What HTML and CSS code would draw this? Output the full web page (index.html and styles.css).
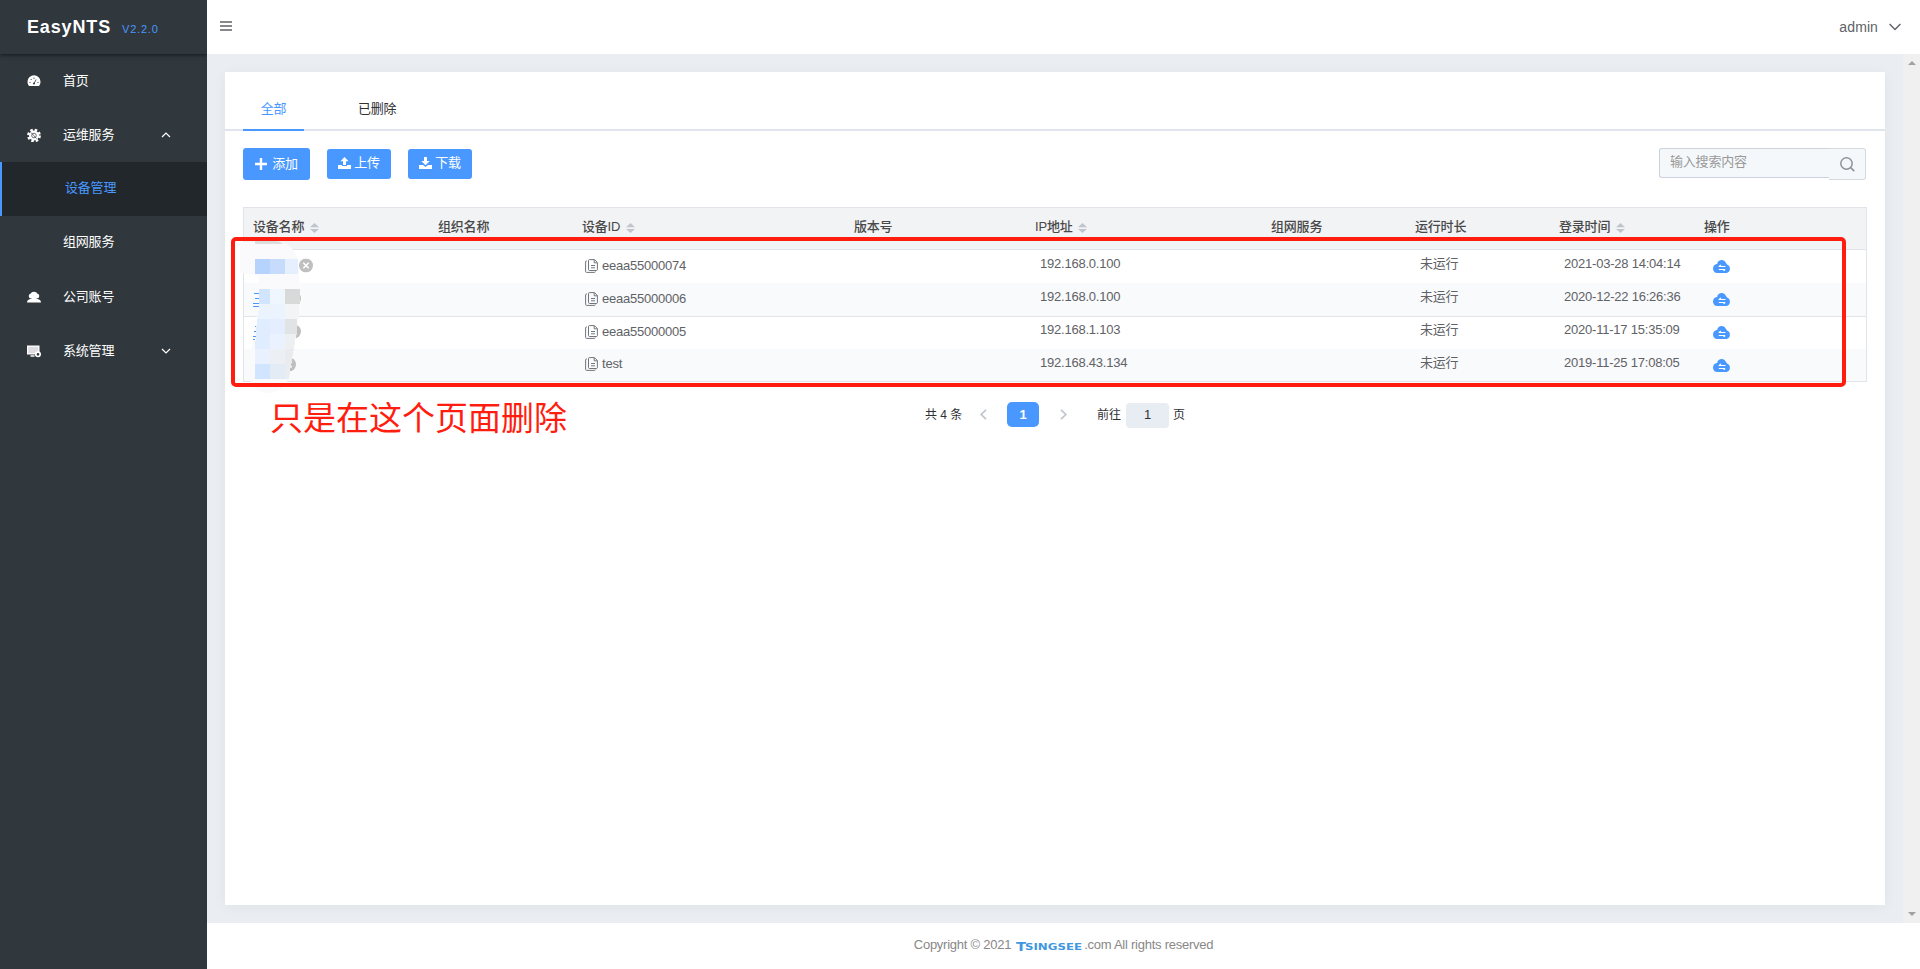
FILE: index.html
```html
<!DOCTYPE html>
<html lang="zh-CN">
<head>
<meta charset="utf-8">
<title>EasyNTS</title>
<link rel="stylesheet" href="styles.css">
</head>
<body>
<svg class="defs" width="0" height="0">
  <symbol id="copy" viewBox="0 0 13 14"><path d="M3.500 1.600a1 1 0 0 1 1-1h5L12.400 3.500v7a1 1 0 0 1-1 1h-6.900a1 1 0 0 1-1-1zM9.200.800v3h3M6 6.500h4M6 8.800h4M2 2H1.500a.900.900 0 0 0-.900.900v9.500a1 1 0 0 0 1 1h7.800a1 1 0 0 0 1-.900" fill="none" stroke="#70757d" stroke-width="1"/></symbol>
  <symbol id="cloud" viewBox="0 0 18 14"><path d="M4.200 5A4.600 4.600 0 0 1 13 3.900a3.200 3.200 0 0 1 1 1.600A4.500 4.500 0 0 1 13.800 14H4.200A4.600 4.600 0 0 1 2.800 5.200 4 4 0 0 1 4.200 5z" fill="#4898ff"/><path d="M5.600 7.500h6.900M8 6L6.200 7.500M5.800 10.500h6.400M10.600 11.800l1.600-1.300" stroke="#fff" stroke-width="1.200" fill="none"/></symbol>
  <symbol id="sort" viewBox="0 0 9 10"><path d="M0 4.200L4.500 0 9 4.200zM0 6L4.500 10 9 6z" fill="#c0c4cc"/></symbol>
  <symbol id="close" viewBox="0 0 14 14"><circle cx="7" cy="7" r="7" fill="#bfbfbf"/><path d="M4.300 4.300l5.400 5.400M9.700 4.300L4.300 9.700" stroke="#fff" stroke-width="1.600"/></symbol>
</svg>
<div class="app">
  <aside class="side">
    <div class="brand"><b>EasyNTS</b><span>V2.2.0</span></div>
    <nav>
      <a class="item"><svg class="ico" viewBox="0 0 14 14"><path d="M2 12A6.500 6.500 0 1 1 12 12z" fill="#fff"/><g fill="#30373d"><circle cx="3" cy="8.500" r=".6"/><circle cx="4.200" cy="5.500" r=".6"/><circle cx="7" cy="4.200" r=".6"/><circle cx="11" cy="8.500" r=".6"/><circle cx="7" cy="9.500" r="1"/></g><path d="M7 9.500l2.200-4" stroke="#30373d" stroke-width=".8"/></svg><span>首页</span></a>
      <a class="item"><svg class="ico" viewBox="0 0 14 14"><circle cx="7" cy="7.500" r="5" fill="#fff"/><circle cx="7" cy="7.500" r="5.700" fill="none" stroke="#fff" stroke-width="2.400" stroke-dasharray="2.500 1.980"/><circle cx="7" cy="7.500" r="2.300" fill="none" stroke="#30373d" stroke-width=".7"/><path d="M4 4.500l5.500 6" stroke="#30373d" stroke-width=".7"/></svg><span>运维服务</span><svg class="arr" viewBox="0 0 10 6"><path d="M1 5l4-4 4 4"/></svg></a>
      <a class="item active"><span>设备管理</span></a>
      <a class="item sub"><span>组网服务</span></a>
      <a class="item"><svg class="ico" viewBox="0 0 14 14"><g fill="#fff"><circle cx="4.300" cy="6" r="2.500"/><circle cx="9.700" cy="6" r="2.500"/><circle cx="7" cy="5" r="3.300"/><path d="M0 12.500q0-2.700 3.500-3.500h7q3.500.800 3.500 3.500zM4.500 7h5v3h-5z"/></g></svg><span>公司账号</span></a>
      <a class="item"><svg class="ico" viewBox="0 0 14 14"><path d="M0 1.500h12.500v9H0z" fill="#fff"/><path d="M1.200 2.800h10v6.500h-10z" fill="#dcdce2"/><path d="M3.500 12h4" stroke="#fff" stroke-width="1.500"/><circle cx="11" cy="10.300" r="2.200" fill="#30373d" stroke="#fff" stroke-width="1.700"/></svg><span>系统管理</span><svg class="arr" viewBox="0 0 10 6"><path d="M1 1l4 4 4-4"/></svg></a>
    </nav>
  </aside>
  <div class="main">
    <header class="top">
      <svg width="12" height="10" viewBox="0 0 12 10"><path d="M0 1h12M0 5h12M0 9h12" stroke="#606266" stroke-width="1.600"/></svg>
      <div class="user">admin<svg width="12" height="8" viewBox="0 0 12 8"><path d="M.6 1L6 6.500 11.400 1" fill="none" stroke="#606266" stroke-width="1.400"/></svg></div>
    </header>
    <div class="scroll">
      <div class="content">
        <section class="card">
          <div class="tabs"><span class="tab on">全部</span><span class="tab two">已删除</span></div>
          <div class="tools">
            <button class="btn add"><svg width="12" height="12" viewBox="0 0 12 12"><path d="M6 0v12M0 6h12" stroke="#fff" stroke-width="2.400"/></svg>添加</button>
            <button class="btn"><svg width="13" height="12" viewBox="0 0 13 12"><path d="M6.500 0L10.500 4.300H8V8H5V4.300H2.500zM0 8h4v1h5V8h4v4H0z" fill="#fff"/></svg>上传</button>
            <button class="btn"><svg width="13" height="12" viewBox="0 0 13 12"><path d="M6.500 8.200L2.300 4H5V0h3v4h2.700zM0 8h4l2.500 2L9 8h4v4H0z" fill="#fff"/></svg>下载</button>
            <div class="search"><div class="inp">输入搜索内容</div><div class="go"><svg width="15" height="15" viewBox="0 0 15 15"><circle cx="6.500" cy="6.500" r="5.700" fill="none" stroke="#909399" stroke-width="1.500"/><path d="M10.700 10.700l3.600 3.400" stroke="#909399" stroke-width="1.600"/></svg></div></div>
          </div>
          <div class="table">
            <div class="row head"><div class="first">设备名称<svg class="sort"><use href="#sort"/></svg></div><div>组织名称</div><div>设备ID<svg class="sort"><use href="#sort"/></svg></div><div>版本号</div><div>IP地址<svg class="sort"><use href="#sort"/></svg></div><div>组网服务</div><div>运行时长</div><div>登录时间<svg class="sort"><use href="#sort"/></svg></div><div class="ops">操作</div></div>
            <div class="row"><div></div><div></div><div class="id"><svg><use href="#copy"/></svg>eeaa55000074</div><div></div><div class="v">192.168.0.100</div><div></div><div class="v">未运行</div><div class="v">2021-03-28 14:04:14</div><div class="op"><svg><use href="#cloud"/></svg></div></div>
            <div class="row alt"><div></div><div></div><div class="id"><svg><use href="#copy"/></svg>eeaa55000006</div><div></div><div class="v">192.168.0.100</div><div></div><div class="v">未运行</div><div class="v">2020-12-22 16:26:36</div><div class="op"><svg><use href="#cloud"/></svg></div></div>
            <div class="row"><div></div><div></div><div class="id"><svg><use href="#copy"/></svg>eeaa55000005</div><div></div><div class="v">192.168.1.103</div><div></div><div class="v">未运行</div><div class="v">2020-11-17 15:35:09</div><div class="op"><svg><use href="#cloud"/></svg></div></div>
            <div class="row alt last"><div></div><div></div><div class="id"><svg><use href="#copy"/></svg>test</div><div></div><div class="v">192.168.43.134</div><div></div><div class="v">未运行</div><div class="v">2019-11-25 17:08:05</div><div class="op"><svg><use href="#cloud"/></svg></div></div>
            <svg class="mosaic" width="120" height="165" viewBox="225 235 120 165">
              <use href="#close" x="299" y="258.500" width="14" height="14"/>
              <use href="#close" x="287" y="291.500" width="14" height="14"/>
              <use href="#close" x="287" y="324.500" width="14" height="14"/>
              <use href="#close" x="282" y="357.500" width="14" height="14"/>
              <path d="M240 242h41q18 5 18 30l1 25-4 40-8 42q-4 14-20 14-14 0-18-14l-1-15 8-45 2-42q-2-2-19-4z" fill="#fafafc"/>
              <path d="M254 293.500h7M255 298.500h6M253 303.500h8M253 306.500h7M255 326.500h3M254 331.500h4M253 336.500h3M253 339.500h2" stroke="#4898ff"/>
              <path d="M255 241h20q5 0 8 3h-28z" fill="#dedede"/>
              <g shape-rendering="crispEdges">
              <path d="M255 259h15v15h-15z" fill="#b5d3fc"/><path d="M270 259h15v15h-15z" fill="#c7dbfd"/><path d="M285 259h13v15h-13z" fill="#e6effd"/>
              <path d="M259 289h11v15h-11z" fill="#d2e5fe"/><path d="M270 289h15v15h-15z" fill="#f0f6fe"/><path d="M285 289h15v15h-15z" fill="#d8dad9"/>
              <path d="M259 304h26v15h-27z" fill="#eaf3fe"/><path d="M285 304h14v15h-14z" fill="#f3f4f6"/>
              <path d="M257 319h13v15h-14z" fill="#e0edfe"/><path d="M270 319h15v15h-15z" fill="#e4eefe"/><path d="M285 319h12v15h-12z" fill="#e2e3e4"/>
              <path d="M256 334h14v15h-15z" fill="#e0edfe"/><path d="M270 334h15v15h-15z" fill="#e9f2fe"/><path d="M285 334h11l-2 15h-9z" fill="#eeeff0"/>
              <path d="M255 349h15v15h-15z" fill="#e8f1fd"/><path d="M270 349h15v15h-15z" fill="#eceff4"/><path d="M285 349h9l-3 15h-6z" fill="#e9ebee"/>
              <path d="M255 364h15v15h-15z" fill="#d2e5fe"/><path d="M270 364h15v15h-15z" fill="#e3ebf4"/><path d="M285 364h6l-2 15h-4z" fill="#e9ecf0"/>
              </g>
            </svg>
            <div class="mark"></div>
            <div class="note">只是在这个页面删除</div>
          </div>
          <div class="pager">
            <span class="total">共 4 条</span>
            <svg class="prev" width="7" height="11" viewBox="0 0 7 11"><path d="M6 .8L1.200 5.500 6 10.200"/></svg>
            <b class="cur">1</b>
            <svg class="next" width="7" height="11" viewBox="0 0 7 11"><path d="M1 .8l4.800 4.700L1 10.200"/></svg>
            <span>前往</span><span class="num">1</span><span>页</span>
          </div>
        </section>
      </div>
      <div class="bar"><i class="up"></i><i class="down"></i></div>
    </div>
    <footer class="foot"><span>Copyright © 2021</span><span class="logo"><svg width="67" height="12" viewBox="0 0 67 12"><text x="0" y="10.500" font-size="13" textLength="10" lengthAdjust="spacingAndGlyphs">T</text><text x="9" y="10" font-size="9.500" textLength="57" lengthAdjust="spacingAndGlyphs">SINGSEE</text></svg></span><span>.com All rights reserved</span></footer>
  </div>
</div>
</body>
</html>
```
FILE: styles.css
```css
* { box-sizing: border-box; }
body { margin: 0; font: 13px/18px "Liberation Sans", "Noto Sans CJK SC", sans-serif; color: #606266; background: #fff; overflow: hidden; }
.defs { display: block; position: absolute; }
.app { display: flex; height: 969px; }
.side { width: 207px; background: #30373d; color: #fff; overflow: hidden; }
.brand { height: 54px; padding: 13px 0 0 27px; box-shadow: 0 1px 4px rgba(0, 0, 0, .55); line-height: 28px; display: flex; }
.brand b { font-size: 18px; letter-spacing: .85px; width: 95px; }
.brand span { font-size: 11px; letter-spacing: .8px; color: #4898ff; padding-top: 2px; }
.item { display: flex; align-items: center; height: 54px; padding: 0 0 1px 27px; }
.ico { width: 14px; height: 14px; margin-right: 22px; }
.item span { width: 97px; letter-spacing: -.2px; }
.arr { width: 10px; height: 6px; fill: none; stroke: #fff; stroke-width: 1.200; margin-left: 1px; }
.active { background: #22272b; border-left: 2px solid #4898ff; color: #4898ff; padding: 0 0 3px 63px; }
.sub { padding: 0 0 3px 63px; }
.main { flex: 1; display: flex; flex-direction: column; }
.top { height: 54px; display: flex; align-items: center; justify-content: space-between; padding: 0 19px 2px 13px; }
.user { font-size: 14px; letter-spacing: .1px; display: flex; align-items: center; gap: 11px; padding-top: 2px; }
.scroll { height: 869px; display: flex; background: #eaeef3; }
.content { flex: 1; padding: 18px; }
.card { height: 833px; background: #fff; box-shadow: 0 2px 12px rgba(0, 0, 0, .05); padding-left: 18px; }
.bar { width: 17px; background: #f0f0f0; display: flex; flex-direction: column; justify-content: space-between; align-items: center; padding: 7px 0; }
.bar i { border: 4px solid transparent; }
.up { border-top: 0 !important; border-bottom-color: #a0a0a0 !important; }
.down { border-bottom: 0 !important; border-top-color: #a0a0a0 !important; }
.tabs { display: flex; margin-left: -18px; padding-left: 18px; height: 59px; border-bottom: 2px solid #dfe4ed; color: #303133; letter-spacing: -.2px; }
.tab { height: 59px; padding-top: 28px; }
.on { width: 61px; text-align: center; border-bottom: 2px solid #4898ff; color: #4898ff; }
.two { margin-left: 54px; }
.tools { display: flex; align-items: center; height: 66px; margin-right: 19px; }
.btn { height: 30px; width: 64px; margin: 0 17px 0 0; padding: 0 0 2px; border: 0; border-radius: 3px; background: #4898ff; color: #fff; font: inherit; letter-spacing: -.2px; display: flex; align-items: center; justify-content: center; gap: 3px; }
.add { width: 67px; height: 32px; gap: 5px; padding: 0; }
.search { margin-left: auto; display: flex; color: #999; letter-spacing: -.2px; }
.inp { width: 170px; height: 30px; border: 1px solid #ccd3dc; border-right: 0; border-radius: 3px 0 0 3px; background: #f4f8fb; padding: 4px 10px; }
.go { width: 37px; height: 32px; border: 1px solid #d5dae0; border-left: 0; border-radius: 0 3px 3px 0; background: #f4f8fb; padding: 8px 11px; }
.table { position: relative; width: 1624px; margin-top: 10px; border: 1px solid #e1e5ea; border-width: 1px 1px 0; }
.row { display: grid; grid-template-columns: 184px 144px 272px 181px 236px 144px 144px 147px 1fr; height: 33px; }
.row > div { border-bottom: 1px solid #e1e5ea; padding-left: 10px; white-space: nowrap; }
.alt > div { background: #f9fafc; }
.head { height: 42px; color: #484848; font-weight: 500; letter-spacing: -.2px; }
.head > div { background: #f2f3f5; padding-top: 10px; }
.head .first { padding-left: 9px; }
.head .ops { padding-left: 8px; }
.sort { width: 9px; height: 10px; margin-left: 6px; vertical-align: -2px; }
.id { display: flex; align-items: center; gap: 4px; letter-spacing: -.22px; }
.row .id { padding: 0 0 2px 13px; }
.id svg { width: 13px; height: 14px; }
.row .v { padding: 5px 0 0 15px; letter-spacing: -.22px; }
.row .op { padding: 9px 0 0 17px; height: 34px; position: relative; }
.last .op { height: 33px; }
.op svg { width: 18px; height: 14px; display: block; }
.mosaic { position: absolute; left: -19px; top: 27px; }
.mark { position: absolute; left: -13px; top: 29px; width: 1615px; height: 150px; border: 5px solid #ff1d10; border-width: 4.500px; border-radius: 5px; }
.note { position: absolute; left: 26px; top: 187px; font-size: 33px; line-height: 48px; color: #ff1d10; white-space: nowrap; }
.pager { display: flex; align-items: center; height: 25px; margin: 20px 0 0 682px; font-size: 12px; color: #303133; }
.pager svg { fill: none; stroke: #c0c4cc; stroke-width: 1.700; }
.total { width: 55px; }
.cur { width: 32px; height: 25px; margin: 0 21px 0 20px; border-radius: 5px; background: #4898ff; color: #fff; text-align: center; line-height: 25px; font-size: 13px; }
.next { margin-right: 30px; }
.num { width: 43px; height: 25px; margin: 2px 4px 0 5px; background: #e8ecf3; border-radius: 4px; text-align: center; line-height: 23px; font-size: 13px; }
.foot { height: 46px; display: flex; justify-content: center; align-items: center; color: #888; padding: 0 0 3px 0; letter-spacing: -.25px; }
.logo { margin: 3px 1px 0 5px; height: 12px; }
.logo svg { display: block; letter-spacing: 0; }
.logo text { font-family: "DejaVu Sans", sans-serif; font-weight: bold; fill: #3f97e0; }
```
